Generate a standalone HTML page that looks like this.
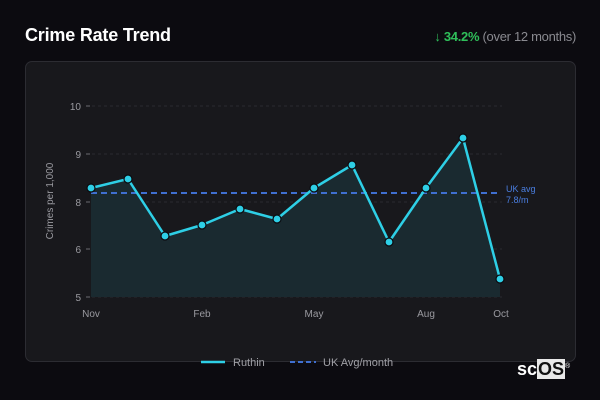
<!DOCTYPE html>
<html><head><style>
body{margin:0;width:600px;height:400px;background:#0c0b10;font-family:"Liberation Sans","DejaVu Sans",sans-serif;position:relative;overflow:hidden}
.t{position:absolute;left:25px;top:25px;color:#fff;font-size:18px;font-weight:bold;letter-spacing:-0.2px}
.s{position:absolute;right:24px;top:29px;font-size:13px;color:#8a8a90;letter-spacing:-0.3px}
.s b{color:#2fbf5a}
.card{position:absolute;left:25px;top:61px;width:549px;height:299px;background:#18181c;border:1px solid #2c2c32;border-radius:7px}
svg{position:absolute;left:0;top:0}
.logo{position:absolute;left:517px;top:359px;font-size:18px;color:#fff;font-weight:bold}
.logo span{background:#e8e8e8;color:#111;padding:0 1px}
</style></head><body>
<div class="t">Crime Rate Trend</div>
<div class="s"><b>↓ 34.2%</b> (over 12 months)</div>
<div class="card"></div>
<svg width="600" height="400" font-family="Liberation Sans, sans-serif">
<g stroke="#2a2a30" stroke-dasharray="3,3" stroke-width="1">
<line x1="92" y1="106" x2="502" y2="106"/><line x1="92" y1="154" x2="502" y2="154"/><line x1="92" y1="202" x2="502" y2="202"/><line x1="92" y1="249" x2="502" y2="249"/><line x1="92" y1="297" x2="502" y2="297"/>
</g>
<g stroke="#6a6a70" stroke-width="1">
<line x1="86" y1="106" x2="90" y2="106"/><line x1="86" y1="154" x2="90" y2="154"/><line x1="86" y1="202" x2="90" y2="202"/><line x1="86" y1="249" x2="90" y2="249"/><line x1="86" y1="297" x2="90" y2="297"/>
</g>
<g fill="#9a9aa0" font-size="10" text-anchor="end">
<text x="81" y="110">10</text><text x="81" y="158">9</text><text x="81" y="206">8</text><text x="81" y="253">6</text><text x="81" y="301">5</text>
</g>
<text transform="translate(53,201) rotate(-90)" fill="#9a9aa0" font-size="10" text-anchor="middle">Crimes per 1,000</text>
<polygon points="91,188 128,179 165,236 202,225 240,209 277,219 314,188 352,165 389,242 426,188 463,138 500,279 500,297 91,297" fill="#1a2a30"/>
<line x1="91" y1="193" x2="498" y2="193" stroke="#3f6fd0" stroke-width="2" stroke-dasharray="6,4"/>
<polyline points="91,188 128,179 165,236 202,225 240,209 277,219 314,188 352,165 389,242 426,188 463,138 500,279" fill="none" stroke="#2ecfe6" stroke-width="2.5" stroke-linejoin="round"/>
<g fill="#2ecfe6" stroke="#0c0b10" stroke-width="1.2">
<circle cx="91" cy="188" r="4"/><circle cx="128" cy="179" r="4"/><circle cx="165" cy="236" r="4"/><circle cx="202" cy="225" r="4"/><circle cx="240" cy="209" r="4"/><circle cx="277" cy="219" r="4"/><circle cx="314" cy="188" r="4"/><circle cx="352" cy="165" r="4"/><circle cx="389" cy="242" r="4"/><circle cx="426" cy="188" r="4"/><circle cx="463" cy="138" r="4"/><circle cx="500" cy="279" r="4"/>
</g>
<g fill="#4a7ee0" font-size="9"><text x="506" y="192">UK avg</text><text x="506" y="203">7.8/m</text></g>
<g fill="#9a9aa0" font-size="10" text-anchor="middle">
<text x="91" y="317">Nov</text><text x="202" y="317">Feb</text><text x="314" y="317">May</text><text x="426" y="317">Aug</text><text x="501" y="317">Oct</text>
</g>
<line x1="201" y1="362" x2="225" y2="362" stroke="#2ecfe6" stroke-width="2.5"/>
<text x="233" y="366" fill="#a0a0a6" font-size="11">Ruthin</text>
<line x1="290" y1="362" x2="316" y2="362" stroke="#3f6fd0" stroke-width="2" stroke-dasharray="5,3"/>
<text x="323" y="366" fill="#a0a0a6" font-size="11">UK Avg/month</text>
</svg>
<div class="logo">sc<span>OS</span><sup style="font-size:7px;font-weight:normal">®</sup></div>
</body></html>
